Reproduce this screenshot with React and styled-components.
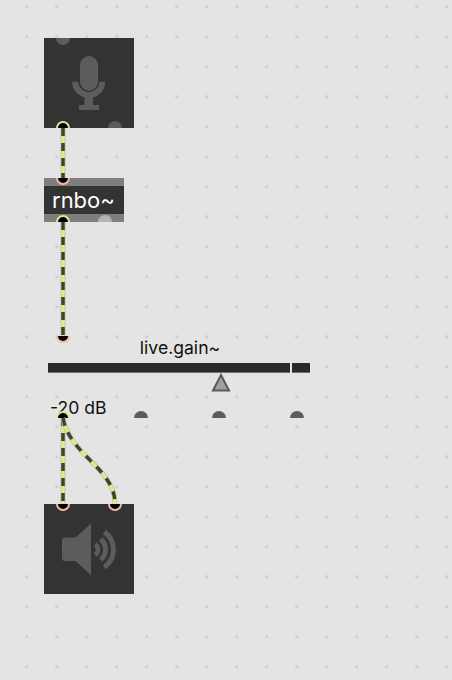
import React from 'react';
import styled, {createGlobalStyle} from 'styled-components';

const GlobalStyle = createGlobalStyle`
  html, body {
    margin: 0;
    padding: 0;
    background: #e4e4e4;
  }
`;

const Patcher = styled.div`
  position: relative;
  width: 452px;
  height: 680px;
  overflow: hidden;
  background-color: #e4e4e4;
  background-image: radial-gradient(circle at center, #cdcdcd 0, #cdcdcd 1.2px, transparent 1.9px);
  background-size: 30px 30px;
  background-position: 11.7px -8.3px;
  font-family: Inter, "Liberation Sans", Arial, sans-serif;
`;

// every object sits on the free patcher canvas, so x/y are its content
const Box = styled.div`
  position: absolute;
  left: ${p => p.$x}px;
  top: ${p => p.$y}px;
  width: ${p => p.$w}px;
  height: ${p => p.$h}px;
  overflow: hidden;
  background: ${p => p.$bg || 'transparent'};
`;

const Tile = styled(Box)`
  display: flex;
  align-items: center;
  justify-content: center;
`;

// rings for in/outlets, the plain ones are just dimmed discs
const Port = styled.span`
  position: absolute;
  left: ${p => p.$x - 7}px;
  top: ${p => p.$y - 7}px;
  width: 14px;
  height: 14px;
  border-radius: 50%;
  box-sizing: border-box;
  background: ${p => p.$kind === 'dim' ? p.$color || '#5c5c5c' : '#000'};
  border: ${p => p.$kind === 'in' ? '2px solid #f4b8a6' : p.$kind === 'out' ? '2px solid #dfe88a' : 'none'};
`;

const RnboBox = styled(Box)`
  display: flex;
  flex-direction: column;
  justify-content: center;
  background: #7f7f7f;
`;

const RnboLabel = styled.div`
  height: 28px;
  line-height: 28px;
  padding-left: 8px;
  background: #333;
  color: #fff;
  font-size: 22px;
`;

const GainBox = styled(Box)`
  display: flex;
  flex-direction: column;
  padding: 2px 6px 0 4px;
  box-sizing: border-box;
  color: #111;
`;

const GainLabel = styled.div`
  padding-left: 2px;
  text-align: center;
  font-size: 17.6px;
  line-height: 20px;
`;

const Meter = styled.div`
  display: flex;
  gap: 2px;
  height: 10px;
  margin-top: 5px;
`;

const MeterSeg = styled.div`
  flex: ${p => p.$grow} 0 0;
  background: #2a2a2a;
  border-bottom: 1px solid #6e6e6e;
  box-sizing: border-box;
`;

const Handle = styled.svg`
  display: block;
  flex: none;
  margin-left: 163px;
`;

const GainValue = styled.div`
  margin-top: 5px;
  padding-left: 2px;
  font-size: 17.6px;
  line-height: 20px;
`;

const Cables = styled.svg`
  position: absolute;
  left: 0;
  top: 0;
  pointer-events: none;
`;

const cablePaths = [
  'M63 128 L63 178',
  'M63 222 L63 336',
  'M63 418 L63 504',
  'M63 418 C70 456 115 468 115 504',
];

function Cable({d}) {
  return (
    <g fill="none">
      <path d={d} stroke="#bdbdb6" strokeWidth="5" />
      <path d={d} stroke="#dcee82" strokeWidth="3.5" />
      <path d={d} stroke="#3f4230" strokeWidth="3.5" strokeDasharray="8 7" />
    </g>
  );
}

export default function App() {
  return (
    <Patcher>
      <GlobalStyle />

      <Tile $x={44} $y={38} $w={90} $h={90} $bg="#333">
        <Port $kind="dim" $x={19} $y={0} />
        <Port $kind="dim" $x={71} $y={90} />
        <Port $kind="out" $x={19} $y={90} />
        <svg width="90" height="90" viewBox="0 0 90 90">
          <path d="M31.2 43.7 a13.5 13.5 0 0 0 27 0" fill="none" stroke="#5c5c5c" strokeWidth="6" />
          <rect x="36" y="18" width="18" height="34.7" rx="9" fill="#5c5c5c" />
          <path d="M40.5 58 h8.5 v9 h6 v5 h-20 v-5 h5.5 z" fill="#5c5c5c" />
        </svg>
      </Tile>

      <RnboBox $x={44} $y={178} $w={80} $h={44}>
        <RnboLabel>rnbo~</RnboLabel>
        <Port $kind="in" $x={19} $y={0} />
        <Port $kind="out" $x={19} $y={44} />
        <Port $kind="dim" $color="#b4b4b4" $x={61} $y={44} />
      </RnboBox>

      <GainBox $x={44} $y={336} $w={272} $h={82}>
        <Port $kind="in" $x={19} $y={0} />
        <GainLabel>live.gain~</GainLabel>
        <Meter>
          <MeterSeg $grow={242} />
          <MeterSeg $grow={18} />
        </Meter>
        <Handle width="20" height="20" viewBox="0 0 20 20">
          <path d="M10 2 L18 17.5 L2 17.5 Z" fill="#a0a0a0" stroke="#5a5a5a" strokeWidth="2" />
        </Handle>
        <GainValue>-20 dB</GainValue>
        <Port $kind="out" $x={19} $y={82} />
        <Port $kind="dim" $x={97} $y={82} />
        <Port $kind="dim" $x={175} $y={82} />
        <Port $kind="dim" $x={253} $y={82} />
      </GainBox>

      <Tile $x={44} $y={504} $w={90} $h={90} $bg="#333">
        <Port $kind="in" $x={19} $y={0} />
        <Port $kind="in" $x={71} $y={0} />
        <svg width="90" height="90" viewBox="0 0 90 90">
          <path d="M21 33.5 h10.5 L47 19.5 V71 L31.5 57 H21 a3 3 0 0 1 -3 -3 V36.5 a3 3 0 0 1 3 -3 Z" fill="#5c5c5c" />
          <path d="M51 40.3 A6 6 0 0 1 51 50.7" fill="none" stroke="#5c5c5c" strokeWidth="4.5" />
          <path d="M56.7 35.2 A13.5 13.5 0 0 1 56.7 55.8 M60.3 27.9 A21.5 21.5 0 0 1 60.3 63.1" fill="none" stroke="#5c5c5c" strokeWidth="5" />
        </svg>
      </Tile>

      <Cables width="452" height="680">
        {cablePaths.map(d => <Cable key={d} d={d} />)}
      </Cables>
    </Patcher>
  );
}
